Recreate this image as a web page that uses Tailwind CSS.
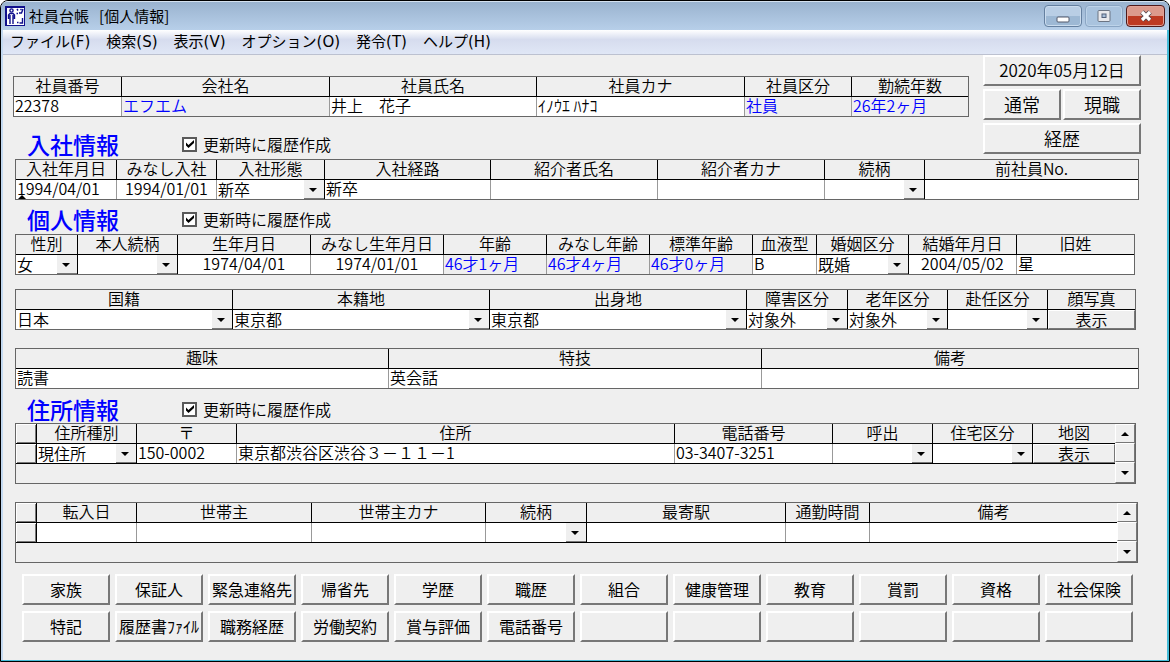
<!DOCTYPE html>
<html lang="ja">
<head>
<meta charset="utf-8">
<meta name="viewport" content="width=device-width, initial-scale=1">
<title>社員台帳 [個人情報]</title>
<script src="https://cdn.jsdelivr.net/npm/@tailwindcss/browser@4"></script>
</head>
<body class="min-h-screen bg-white font-['Noto_Sans_CJK_JP',sans-serif] text-black">

<svg class="hidden" aria-hidden="true">
  <symbol id="down" viewBox="0 0 8 4"><path d="M0 0h8L4 4z"/></symbol>
  <symbol id="up" viewBox="0 0 8 4"><path d="M0 4h8L4 0z"/></symbol>
  <symbol id="check" viewBox="0 0 8 8"><path d="M0 2.500v3L2.500 8 8 3V0L2.500 5z"/></symbol>
</svg>

<div class="flex min-h-screen flex-col overflow-hidden rounded-t-lg border border-black bg-[#efefef] shadow-[inset_-2px_-1px_0_#45bcd8,inset_2px_0_0_#c3d9f0]">

  <header class="flex h-[29px] shrink-0 items-center rounded-t-md border-t border-[#d5e2f0] bg-linear-to-b from-[#9ab3cf] to-[#b7cfe9] pr-1 pl-1">
    <svg class="h-5 w-5" viewBox="0 0 20 20" aria-hidden="true">
      <path fill="#10108c" d="M0 0h20v20H0z"/><path fill="#fff" d="M2 2h17v17H2z"/>
      <g fill="none" stroke="#10108c" stroke-width="1.4"><circle cx="6.500" cy="4.500" r="1.600"/><path d="M3.500 13V9L5 7.500h3L9.500 9v4M5 9v9M8 9v9M12 3l1 1.500M15.500 3l1 1M18 3l-1.500 4H14M11.500 7.500H13M17.500 12v5h-3M12 16.500h1.500"/></g>
    </svg>
    <h1 class="ml-1 flex-1 text-[15px] leading-6">社員台帳&nbsp;&nbsp; [個人情報]</h1>
    <div class="flex gap-[3px]">
      <button type="button" aria-label="最小化" class="flex h-[22px] w-[38px] items-center justify-center rounded-sm border border-[#6580a0] bg-linear-to-b from-[#b9cee5] from-50% to-[#9db8d4] to-50% shadow-[inset_0_0_0_1px_#cbdcee]">
        <svg class="mt-1.5 h-[7px] w-[14px]" viewBox="0 0 14 7"><rect x="1" y="1" width="12" height="5" rx="1" fill="#fff" stroke="#53586a"/></svg>
      </button>
      <button type="button" aria-label="最大化" class="flex h-[22px] w-[38px] items-center justify-center rounded-sm border border-[#8ba6c4] bg-[#a9c3de] shadow-[inset_0_0_0_1px_#bdd3e9]">
        <svg class="h-3 w-[14px]" viewBox="0 0 14 12"><rect x="1" y=".5" width="12" height="11" rx="1" fill="#e9e9ec" stroke="#6b7483"/><rect x="5" y="4" width="4" height="3.500" fill="#a9bfd8" stroke="#53607a"/></svg>
      </button>
      <button type="button" aria-label="閉じる" class="flex h-[22px] w-[39px] items-center justify-center rounded-sm border border-[#4f1a1a] bg-linear-to-b from-[#dc9a8c] from-50% to-[#bd3a22] to-50% shadow-[inset_0_0_0_1px_#e3a397]">
        <svg class="h-3 w-[14px]" viewBox="0 0 14 12"><path d="M3 2l8 8M11 2l-8 8" stroke="#53464d" stroke-width="5"/><path d="M3 2l8 8M11 2l-8 8" stroke="#fff" stroke-width="3.200"/></svg>
      </button>
    </div>
  </header>

  <nav class="mx-0.5 h-[25px] shrink-0 border-b border-[#bcc1d0] bg-linear-to-b from-white via-[#d6dcee] via-40% to-[#e0e7f6] font-['DejaVu_Sans','Noto_Sans_CJK_JP',sans-serif]">
    <ul class="flex h-full items-center gap-4 pl-[7px] text-[15px] leading-6 whitespace-nowrap">
      <li><button type="button">ファイル(F)</button></li>
      <li><button type="button">検索(S)</button></li>
      <li><button type="button">表示(V)</button></li>
      <li><button type="button">オプション(O)</button></li>
      <li><button type="button">発令(T)</button></li>
      <li><button type="button">ヘルプ(H)</button></li>
    </ul>
  </nav>

  <main class="flex-1 pr-[30px] pb-[18px] pl-[14px] text-[16px] leading-[18px]
    [&_table]:w-full [&_table]:table-fixed [&_table]:border-separate [&_table]:border-spacing-0 [&_table]:border [&_table]:border-[#666]
    [&_th]:h-5 [&_th]:border-r [&_th]:border-b [&_th]:border-black [&_th]:p-0 [&_th]:pb-[3px] [&_th]:leading-4 [&_th]:font-[350] [&_th]:whitespace-nowrap [&_th:last-child]:border-r-0
    [&_td]:relative [&_td]:h-[19px] [&_td]:border-r [&_td]:border-[#999] [&_td]:bg-white [&_td]:p-0 [&_td:last-child]:border-r-0
    [&_td>input]:block [&_td>input]:h-[19px] [&_td>input]:w-full [&_td>input]:px-px [&_td>input]:pb-[3px] [&_td>input]:font-[350] [&_td>input]:outline-none
    [&_td_select]:block [&_td_select]:h-[19px] [&_td_select]:w-full [&_td_select]:appearance-none [&_td_select]:px-px [&_td_select]:pb-px [&_td_select]:font-[350] [&_td_select]:outline-none
    [&_td_svg]:pointer-events-none [&_td_svg]:absolute [&_td_svg]:top-0 [&_td_svg]:right-0 [&_td_svg]:h-[19px] [&_td_svg]:w-5 [&_td_svg]:border-b [&_td_svg]:border-[#777] [&_td_svg]:bg-[#efefef] [&_td_svg]:pt-0.5 [&_td_svg]:pr-[7px] [&_td_svg]:pl-[5px]">

    <div class="flex">
      <div class="flex-1">
        <div class="-ml-0.5 pt-[21px] pr-[14px]">
          <table>
            <colgroup><col class="w-[108px]"><col class="w-[208px]"><col class="w-[207px]"><col class="w-[208px]"><col class="w-[107px]"><col class="w-[116px]"></colgroup>
            <thead><tr><th>社員番号</th><th>会社名</th><th>社員氏名</th><th>社員カナ</th><th>社員区分</th><th>勤続年数</th></tr></thead>
            <tbody><tr>
              <td><input aria-label="社員番号" value="22378"></td>
              <td class="bg-[#efefef]!"><input aria-label="会社名" class="text-[#0000ff]" value="エフエム" readonly></td>
              <td><input aria-label="社員氏名" value="井上　花子"></td>
              <td><input aria-label="社員カナ" value="ｲﾉｳｴ ﾊﾅｺ"></td>
              <td class="bg-[#efefef]!"><input aria-label="社員区分" class="text-[#0000ff]" value="社員" readonly></td>
              <td class="bg-[#efefef]!"><input aria-label="勤続年数" class="text-[#0000ff]" value="26年2ヶ月" readonly></td>
            </tr></tbody>
          </table>
        </div>
        <div class="mt-[14px] flex h-7 items-center pb-0.5 pl-3">
          <h2 class="w-[155px] text-[23px] leading-7 font-medium text-[#0000ff]">入社情報</h2>
          <label class="flex items-center gap-1.5 font-[350]">
            <span class="grid place-items-center"><input type="checkbox" checked class="peer col-start-1 row-start-1 h-[15px] w-[15px] appearance-none border-2 border-[#5a5a5a] bg-white"><svg class="invisible col-start-1 row-start-1 h-2 w-2 peer-checked:visible"><use href="#check"/></svg></span>
            更新時に履歴作成
          </label>
        </div>
      </div>
      <div class="-mr-0.5 grid w-[158px] grid-cols-2 content-start gap-x-0.5 gap-y-[3px] text-[18px] font-[350]
        [&>button]:h-[31px] [&>button]:border-2 [&>button]:border-t-white [&>button]:border-r-[#777] [&>button]:border-b-[#777] [&>button]:border-l-white [&>button]:pb-0.5">
        <button type="button" class="col-span-2 text-[17px]">2020年05月12日</button>
        <button type="button">通常</button>
        <button type="button">現職</button>
        <button type="button" class="col-span-2">経歴</button>
      </div>
    </div>

    <table>
      <colgroup><col class="w-[101px]"><col class="w-[100px]"><col class="w-[108px]"><col class="w-[166px]"><col class="w-[167px]"><col class="w-[167px]"><col class="w-[100px]"><col class="w-[213px]"></colgroup>
      <thead><tr><th>入社年月日</th><th>みなし入社</th><th>入社形態</th><th>入社経路</th><th>紹介者氏名</th><th>紹介者カナ</th><th>続柄</th><th>前社員No.</th></tr></thead>
      <tbody><tr>
        <td><input aria-label="入社年月日" value="1994/04/01"><span class="absolute bottom-0 left-0.5 border-x-4 border-b-4 border-x-transparent border-b-black"></span></td>
        <td><input aria-label="みなし入社" class="text-center" value="1994/01/01"></td>
        <td class="border-black!"><select aria-label="入社形態"><option>新卒</option></select><svg><use href="#down"/></svg></td>
        <td><input aria-label="入社経路" value="新卒"></td>
        <td><input aria-label="紹介者氏名"></td>
        <td><input aria-label="紹介者カナ"></td>
        <td class="border-black!"><select aria-label="続柄"><option></option></select><svg><use href="#down"/></svg></td>
        <td><input aria-label="前社員No."></td>
      </tr></tbody>
    </table>

    <div class="mt-1.5 flex h-7 items-center pb-0.5 pl-3">
      <h2 class="w-[155px] text-[23px] leading-7 font-medium text-[#0000ff]">個人情報</h2>
      <label class="flex items-center gap-1.5 font-[350]">
        <span class="grid place-items-center"><input type="checkbox" checked class="peer col-start-1 row-start-1 h-[15px] w-[15px] appearance-none border-2 border-[#5a5a5a] bg-white"><svg class="invisible col-start-1 row-start-1 h-2 w-2 peer-checked:visible"><use href="#check"/></svg></span>
        更新時に履歴作成
      </label>
    </div>
    <div class="pr-1">
      <table>
        <colgroup><col class="w-[62px]"><col class="w-[100px]"><col class="w-[133px]"><col class="w-[133px]"><col class="w-[103px]"><col class="w-[103px]"><col class="w-[103px]"><col class="w-[64px]"><col class="w-[92px]"><col class="w-[108px]"><col class="w-[117px]"></colgroup>
        <thead><tr><th>性別</th><th>本人続柄</th><th>生年月日</th><th>みなし生年月日</th><th>年齢</th><th>みなし年齢</th><th>標準年齢</th><th>血液型</th><th>婚姻区分</th><th>結婚年月日</th><th>旧姓</th></tr></thead>
        <tbody><tr>
          <td class="border-black!"><select aria-label="性別"><option>女</option></select><svg><use href="#down"/></svg></td>
          <td class="border-black!"><select aria-label="本人続柄"><option></option></select><svg><use href="#down"/></svg></td>
          <td><input aria-label="生年月日" class="text-center" value="1974/04/01"></td>
          <td><input aria-label="みなし生年月日" class="text-center" value="1974/01/01"></td>
          <td class="bg-[#efefef]!"><input aria-label="年齢" class="text-[#0000ff]" value="46才1ヶ月" readonly></td>
          <td class="bg-[#efefef]!"><input aria-label="みなし年齢" class="text-[#0000ff]" value="46才4ヶ月" readonly></td>
          <td class="bg-[#efefef]!"><input aria-label="標準年齢" class="text-[#0000ff]" value="46才0ヶ月" readonly></td>
          <td><input aria-label="血液型" value="B"></td>
          <td class="border-black!"><select aria-label="婚姻区分"><option>既婚</option></select><svg><use href="#down"/></svg></td>
          <td><input aria-label="結婚年月日" class="text-center" value="2004/05/02"></td>
          <td><input aria-label="旧姓" value="星"></td>
        </tr></tbody>
      </table>
    </div>

    <div class="mt-[14px] pr-[3px]">
      <table>
        <colgroup><col class="w-[217px]"><col class="w-[257px]"><col class="w-[257px]"><col class="w-[101px]"><col class="w-[100px]"><col class="w-[100px]"><col class="w-[87px]"></colgroup>
        <thead><tr><th>国籍</th><th>本籍地</th><th>出身地</th><th>障害区分</th><th>老年区分</th><th>赴任区分</th><th>顔写真</th></tr></thead>
        <tbody><tr>
          <td class="border-black!"><select aria-label="国籍"><option>日本</option></select><svg><use href="#down"/></svg></td>
          <td class="border-black!"><select aria-label="本籍地"><option>東京都</option></select><svg><use href="#down"/></svg></td>
          <td class="border-black!"><select aria-label="出身地"><option>東京都</option></select><svg><use href="#down"/></svg></td>
          <td class="border-black!"><select aria-label="障害区分"><option>対象外</option></select><svg><use href="#down"/></svg></td>
          <td class="border-black!"><select aria-label="老年区分"><option>対象外</option></select><svg><use href="#down"/></svg></td>
          <td class="border-black!"><select aria-label="赴任区分"><option></option></select><svg><use href="#down"/></svg></td>
          <td><button type="button" class="block h-[19px] w-full border border-t-white border-r-[#777] border-b-[#777] border-l-white bg-[#efefef] pb-px leading-4 font-[350]">表示</button></td>
        </tr></tbody>
      </table>
    </div>

    <table class="mt-[18px]">
      <colgroup><col class="w-[373px]"><col class="w-[373px]"><col class="w-[376px]"></colgroup>
      <thead><tr><th>趣味</th><th>特技</th><th>備考</th></tr></thead>
      <tbody><tr>
        <td><input aria-label="趣味" value="読書"></td>
        <td><input aria-label="特技" value="英会話"></td>
        <td><input aria-label="備考"></td>
      </tr></tbody>
    </table>

    <div class="mt-1.5 flex h-7 items-center pl-3">
      <h2 class="w-[155px] text-[23px] leading-7 font-medium text-[#0000ff]">住所情報</h2>
      <label class="flex items-center gap-1.5 font-[350]">
        <span class="grid place-items-center"><input type="checkbox" checked class="peer col-start-1 row-start-1 h-[15px] w-[15px] appearance-none border-2 border-[#5a5a5a] bg-white"><svg class="invisible col-start-1 row-start-1 h-2 w-2 peer-checked:visible"><use href="#check"/></svg></span>
        更新時に履歴作成
      </label>
    </div>
    <div class="mr-[3px] flex border border-[#666]">
      <div class="flex-1">
        <table class="border-0! border-b! border-black!">
          <colgroup><col class="w-[21px]"><col class="w-[100px]"><col class="w-[100px]"><col class="w-[438px]"><col class="w-[158px]"><col class="w-[100px]"><col class="w-[100px]"><col class="w-[82px]"></colgroup>
          <thead><tr><th class="shadow-[inset_1px_1px_0_#fff,inset_-1px_-1px_0_#777]" aria-label="行選択"></th><th>住所種別</th><th>〒</th><th>住所</th><th>電話番号</th><th>呼出</th><th>住宅区分</th><th>地図</th></tr></thead>
          <tbody><tr>
            <td class="border-black! bg-[#efefef]! shadow-[inset_1px_1px_0_#fff,inset_-1px_-1px_0_#777]"></td>
            <td class="border-black!"><select aria-label="住所種別"><option>現住所</option></select><svg><use href="#down"/></svg></td>
            <td><input aria-label="郵便番号" value="150-0002"></td>
            <td><input aria-label="住所" value="東京都渋谷区渋谷３－１１－1"></td>
            <td><input aria-label="電話番号" value="03-3407-3251"></td>
            <td class="border-black!"><select aria-label="呼出"><option></option></select><svg><use href="#down"/></svg></td>
            <td class="border-black!"><select aria-label="住宅区分"><option></option></select><svg><use href="#down"/></svg></td>
            <td><button type="button" class="block h-[19px] w-full border border-t-white border-r-[#777] border-b-[#777] border-l-white bg-[#efefef] pb-px leading-4 font-[350]">表示</button></td>
          </tr></tbody>
        </table>
      </div>
      <div class="flex h-[59px] w-5 flex-col [&>button]:border [&>button]:border-t-white [&>button]:border-r-[#777] [&>button]:border-b-[#777] [&>button]:border-l-white">
        <button type="button" aria-label="上へ" class="flex h-[19px] items-center justify-center"><svg class="h-1 w-2"><use href="#up"/></svg></button>
        <button type="button" aria-label="スクロール" class="h-[19px]"></button>
        <button type="button" aria-label="下へ" class="flex h-[21px] items-center justify-center"><svg class="h-1 w-2"><use href="#down"/></svg></button>
      </div>
    </div>

    <div class="mt-[18px] mr-px flex border border-[#666]">
      <div class="flex-1">
        <table class="border-0! border-b! border-black!">
          <colgroup><col class="w-[21px]"><col class="w-[100px]"><col class="w-[175px]"><col class="w-[174px]"><col class="w-[101px]"><col class="w-[199px]"><col class="w-[84px]"><col class="w-[247px]"></colgroup>
          <thead><tr><th class="shadow-[inset_1px_1px_0_#fff,inset_-1px_-1px_0_#777]" aria-label="行選択"></th><th>転入日</th><th>世帯主</th><th>世帯主カナ</th><th>続柄</th><th>最寄駅</th><th>通勤時間</th><th>備考</th></tr></thead>
          <tbody><tr>
            <td class="border-black! bg-[#efefef]! shadow-[inset_1px_1px_0_#fff,inset_-1px_-1px_0_#777]"></td>
            <td><input aria-label="転入日"></td>
            <td><input aria-label="世帯主"></td>
            <td><input aria-label="世帯主カナ"></td>
            <td class="border-black!"><select aria-label="続柄"><option></option></select><svg><use href="#down"/></svg></td>
            <td><input aria-label="最寄駅"></td>
            <td><input aria-label="通勤時間"></td>
            <td><input aria-label="備考"></td>
          </tr></tbody>
        </table>
      </div>
      <div class="flex h-[59px] w-5 flex-col [&>button]:border [&>button]:border-t-white [&>button]:border-r-[#777] [&>button]:border-b-[#777] [&>button]:border-l-white">
        <button type="button" aria-label="上へ" class="flex h-[19px] items-center justify-center"><svg class="h-1 w-2"><use href="#up"/></svg></button>
        <button type="button" aria-label="スクロール" class="h-[19px]"></button>
        <button type="button" aria-label="下へ" class="flex h-[21px] items-center justify-center"><svg class="h-1 w-2"><use href="#down"/></svg></button>
      </div>
    </div>

    <div class="mt-[11px] grid grid-cols-12 gap-x-[5px] gap-y-1.5 pr-1.5 pl-[7px] whitespace-nowrap
      [&>button]:flex [&>button]:h-[31px] [&>button]:items-center [&>button]:justify-center [&>button]:border-2 [&>button]:border-t-white [&>button]:border-r-[#777] [&>button]:border-b-[#777] [&>button]:border-l-white [&>button]:pb-0.5">
      <button type="button">家族</button>
      <button type="button">保証人</button>
      <button type="button">緊急連絡先</button>
      <button type="button">帰省先</button>
      <button type="button">学歴</button>
      <button type="button">職歴</button>
      <button type="button">組合</button>
      <button type="button">健康管理</button>
      <button type="button">教育</button>
      <button type="button">賞罰</button>
      <button type="button">資格</button>
      <button type="button">社会保険</button>
      <button type="button">特記</button>
      <button type="button">履歴書ﾌｧｲﾙ</button>
      <button type="button">職務経歴</button>
      <button type="button">労働契約</button>
      <button type="button">賞与評価</button>
      <button type="button">電話番号</button>
      <button type="button" aria-label="未設定 1"></button>
      <button type="button" aria-label="未設定 2"></button>
      <button type="button" aria-label="未設定 3"></button>
      <button type="button" aria-label="未設定 4"></button>
      <button type="button" aria-label="未設定 5"></button>
      <button type="button" aria-label="未設定 6"></button>
    </div>
  </main>
</div>
</body>
</html>
